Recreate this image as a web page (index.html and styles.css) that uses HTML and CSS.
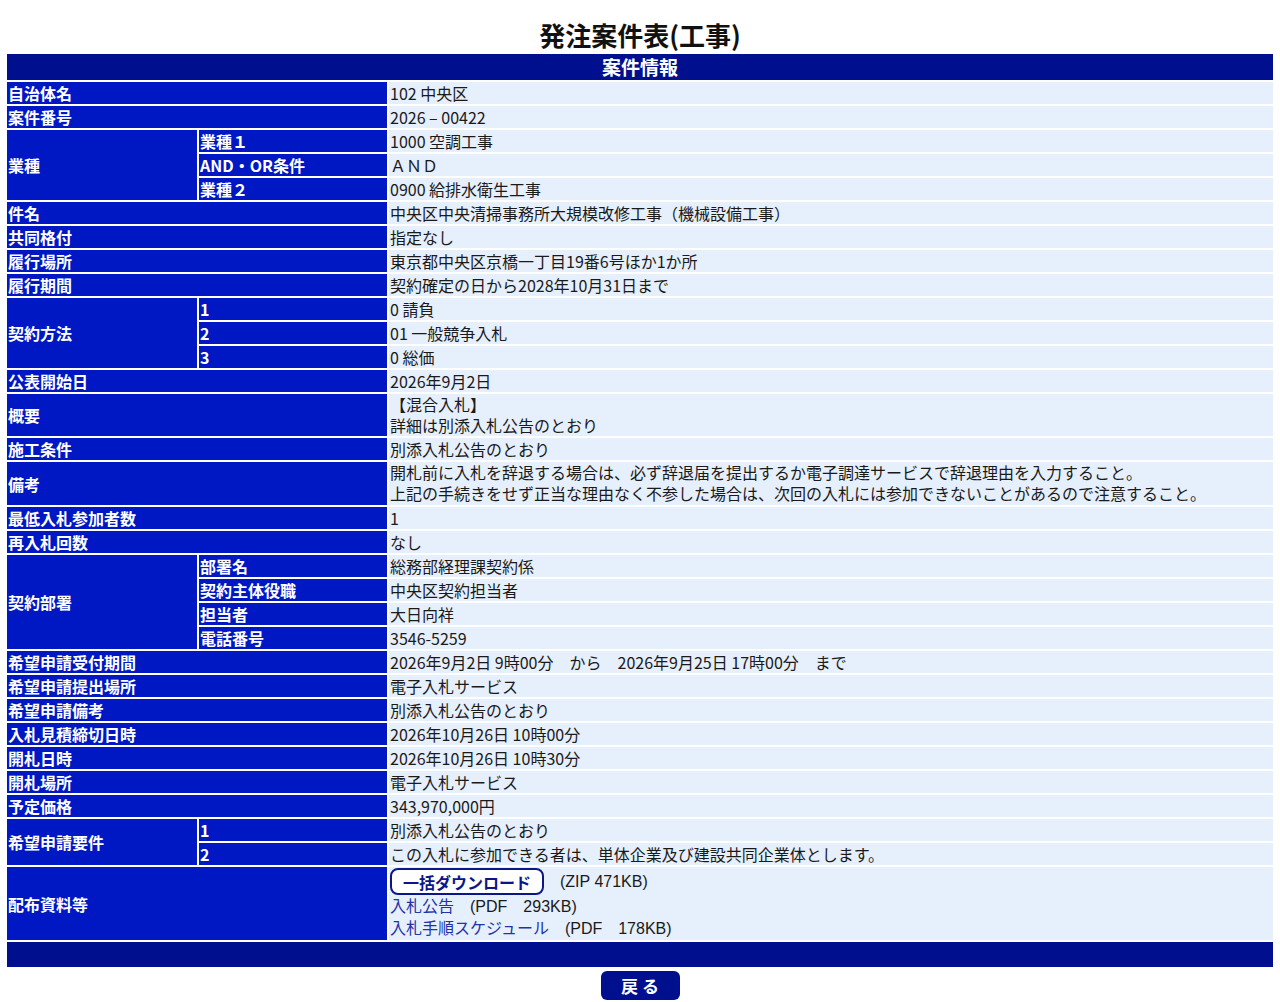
FILE: index.html
```html
<!DOCTYPE html>
<html lang="ja">
<head>
<meta charset="utf-8">
<title>発注案件表(工事)</title>
<link rel="stylesheet" href="styles.css">
</head>
<body>
<h1 class="title">発注案件表(工事)</h1>
<div class="wrap">
<table class="info">
<colgroup><col class="c1"><col class="c2"><col class="c3"></colgroup>
<tr><th colspan="3" class="head">案件情報</th></tr>
<tr><th colspan="2" class="lbl">自治体名</th><td class="val">102 中央区</td></tr>
<tr><th colspan="2" class="lbl">案件番号</th><td class="val">2026 – 00422</td></tr>
<tr><th rowspan="3" class="lbl">業種</th><th class="lbl">業種１</th><td class="val">1000 空調工事</td></tr>
<tr><th class="lbl">AND・OR条件</th><td class="val">ＡＮＤ</td></tr>
<tr><th class="lbl">業種２</th><td class="val">0900 給排水衛生工事</td></tr>
<tr><th colspan="2" class="lbl">件名</th><td class="val">中央区中央清掃事務所大規模改修工事（機械設備工事）</td></tr>
<tr><th colspan="2" class="lbl">共同格付</th><td class="val">指定なし</td></tr>
<tr><th colspan="2" class="lbl">履行場所</th><td class="val">東京都中央区京橋一丁目19番6号ほか1か所</td></tr>
<tr><th colspan="2" class="lbl">履行期間</th><td class="val">契約確定の日から2028年10月31日まで</td></tr>
<tr><th rowspan="3" class="lbl">契約方法</th><th class="lbl">1</th><td class="val">0 請負</td></tr>
<tr><th class="lbl">2</th><td class="val">01 一般競争入札</td></tr>
<tr><th class="lbl">3</th><td class="val">0 総価</td></tr>
<tr><th colspan="2" class="lbl">公表開始日</th><td class="val">2026年9月2日</td></tr>
<tr><th colspan="2" class="lbl">概要</th><td class="val multi">【混合入札】<br>詳細は別添入札公告のとおり</td></tr>
<tr><th colspan="2" class="lbl">施工条件</th><td class="val">別添入札公告のとおり</td></tr>
<tr><th colspan="2" class="lbl">備考</th><td class="val multi note">開札前に入札を辞退する場合は、必ず辞退届を提出するか電子調達サービスで辞退理由を入力すること。<br>上記の手続きをせず正当な理由なく不参した場合は、次回の入札には参加できないことがあるので注意すること。</td></tr>
<tr><th colspan="2" class="lbl">最低入札参加者数</th><td class="val">1</td></tr>
<tr><th colspan="2" class="lbl">再入札回数</th><td class="val">なし</td></tr>
<tr><th rowspan="4" class="lbl">契約部署</th><th class="lbl">部署名</th><td class="val">総務部経理課契約係</td></tr>
<tr><th class="lbl">契約主体役職</th><td class="val">中央区契約担当者</td></tr>
<tr><th class="lbl">担当者</th><td class="val">大日向祥</td></tr>
<tr><th class="lbl">電話番号</th><td class="val">3546-5259</td></tr>
<tr><th colspan="2" class="lbl">希望申請受付期間</th><td class="val">2026年9月2日 9時00分　から　2026年9月25日 17時00分　まで</td></tr>
<tr><th colspan="2" class="lbl">希望申請提出場所</th><td class="val">電子入札サービス</td></tr>
<tr><th colspan="2" class="lbl">希望申請備考</th><td class="val">別添入札公告のとおり</td></tr>
<tr><th colspan="2" class="lbl">入札見積締切日時</th><td class="val">2026年10月26日 10時00分</td></tr>
<tr><th colspan="2" class="lbl">開札日時</th><td class="val">2026年10月26日 10時30分</td></tr>
<tr><th colspan="2" class="lbl">開札場所</th><td class="val">電子入札サービス</td></tr>
<tr><th colspan="2" class="lbl">予定価格</th><td class="val">343,970,000円</td></tr>
<tr><th rowspan="2" class="lbl">希望申請要件</th><th class="lbl">1</th><td class="val">別添入札公告のとおり</td></tr>
<tr><th class="lbl">2</th><td class="val">この入札に参加できる者は、単体企業及び建設共同企業体とします。</td></tr>
<tr class="three"><th colspan="2" class="lbl">配布資料等</th><td class="val multi">
<div class="dl-line"><button class="dl-btn" type="button">一括ダウンロード</button><span class="size">　(ZIP 471KB)</span></div>
<div><a href="#" class="doc">入札公告</a><span class="size">　(PDF　293KB)</span></div>
<div><a href="#" class="doc">入札手順スケジュール</a><span class="size">　(PDF　178KB)</span></div>
</td></tr>
<tr class="footrow"><td colspan="3" class="foot"></td></tr>
</table>
</div>
<div class="back-row"><button class="back" type="button">戻 る</button></div>
</body>
</html>
```
FILE: styles.css
```css
html, body {
  margin: 0;
  padding: 0;
  background: #ffffff;
}
body {
  font-family: "Noto Sans CJK JP", "Liberation Sans", sans-serif;
  font-size: 16px;
  color: #1a1a1a;
}
.title {
  margin: 0;
  padding-top: 18px;
  font-size: 26px;
  line-height: 34px;
  font-weight: bold;
  text-align: center;
  color: #111111;
}
.wrap {
  padding: 0 5px;
}
.info {
  width: 100%;
  border-collapse: separate;
  border-spacing: 2px;
  table-layout: fixed;
  background: #ffffff;
}
.c1 { width: 190px; }
.c2 { width: 188px; }
.info tr.three { height: 73px; }
.info tr.footrow { height: 25px; }
.info th, .info td {
  padding: 0 1px;
  line-height: 22px;
  vertical-align: middle;
  text-align: left;
}
.info td.multi {
  line-height: 21px;
  padding: 0 1px;
}
.info td.note {
  padding-bottom: 1px;
}
.head {
  background: #000f8e;
  color: #ffffff;
  font-size: 19px;
  line-height: 26px !important;
  text-align: center !important;
  font-weight: bold;
}
.lbl {
  background: #0018c4;
  color: #ffffff;
  font-weight: bold;
  font-size: 16px;
}
.val {
  background: #e6effc;
  color: #1a1a1a;
  font-weight: normal;
}
.foot {
  background: #000f8e;
}
.dl-line {
  display: flex;
  align-items: center;
  height: 27px;
}
.dl-btn {
  font-family: "Noto Sans CJK JP", "Liberation Sans", sans-serif;
  font-size: 16px;
  font-weight: bold;
  letter-spacing: 0;
  color: #0a168a;
  background: #ffffff;
  border: 2px solid #0a168a;
  border-radius: 8px;
  height: 27px;
  padding: 0 11px;
  line-height: 20px;
  margin: 0;
}
.size {
  font-family: "Liberation Sans", "Noto Sans CJK JP", sans-serif;
  color: #1a1a1a;
}
.doc {
  color: #2233aa;
  text-decoration: none;
}
.back-row {
  display: flex;
  justify-content: center;
  padding-top: 2px;
}
.back {
  width: 79px;
  height: 29px;
  background: #000f8e;
  color: #ffffff;
  border: none;
  border-radius: 6px;
  font-family: "Noto Sans CJK JP", sans-serif;
  font-size: 17px;
  font-weight: bold;
  padding: 0;
}
```
